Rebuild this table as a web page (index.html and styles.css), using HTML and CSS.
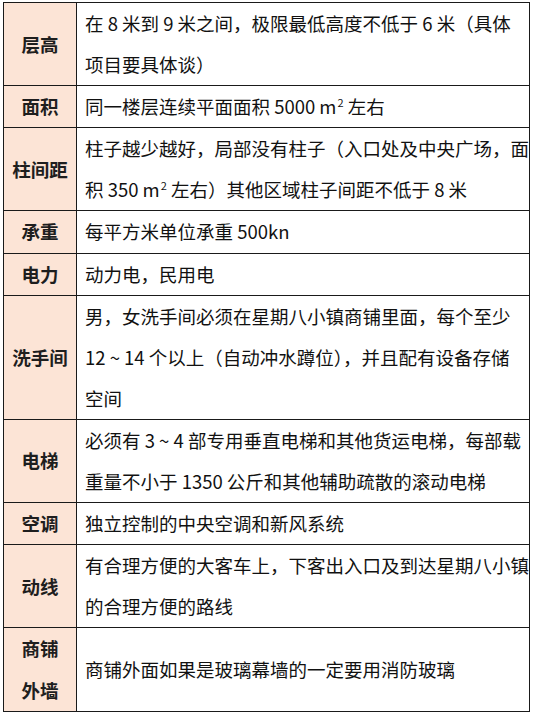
FILE: index.html
```html
<!DOCTYPE html>
<html lang="zh-CN">
<head>
<meta charset="utf-8">
<link rel="stylesheet" href="styles.css">
</head>
<body>
<table class="spec">
  <colgroup><col class="c-label"><col class="c-body"></colgroup>
  <tr><th>层高</th><td>在 8 米到 9 米之间，极限最低高度不低于 6 米（具体<br>项目要具体谈）</td></tr>
  <tr><th>面积</th><td>同一楼层连续平面面积 5000 m<sup>2</sup> 左右</td></tr>
  <tr><th>柱间距</th><td>柱子越少越好，局部没有柱子（入口处及中央广场，面<br>积 350 m<sup>2</sup> 左右）其他区域柱子间距不低于 8 米</td></tr>
  <tr><th>承重</th><td>每平方米单位承重 500kn</td></tr>
  <tr><th>电力</th><td>动力电，民用电</td></tr>
  <tr><th>洗手间</th><td>男，女洗手间必须在星期八小镇商铺里面，每个至少<br>12 ~ 14 个以上（自动冲水蹲位），并且配有设备存储<br>空间</td></tr>
  <tr><th>电梯</th><td>必须有 3 ~ 4 部专用垂直电梯和其他货运电梯，每部载<br>重量不小于 1350 公斤和其他辅助疏散的滚动电梯</td></tr>
  <tr><th>空调</th><td>独立控制的中央空调和新风系统</td></tr>
  <tr><th>动线</th><td>有合理方便的大客车上，下客出入口及到达星期八小镇<br>的合理方便的路线</td></tr>
  <tr><th>商铺<br>外墙</th><td>商铺外面如果是玻璃幕墙的一定要用消防玻璃</td></tr>
</table>
</body>
</html>
```

FILE: styles.css
```css
html, body {
  margin: 0;
  padding: 0;
  background: #ffffff;
}

.spec {
  margin: 2px 0 0 3px;
  width: 527px;
  table-layout: fixed;
  border-collapse: collapse;
  font-family: "Noto Sans CJK SC", "Microsoft YaHei", sans-serif;
  font-size: 18.5px;
  line-height: 41.1px;
  color: #111111;
}

.c-label { width: 73px; }

.spec th,
.spec td {
  border: 1px solid #1a1a1a;
  padding: 0;
  vertical-align: middle;
  white-space: nowrap;
}

.spec th {
  background: #fce4d6;
  font-weight: 700;
  text-align: center;
  color: #1e1e1e;
}

.spec td {
  padding-left: 8px;
  text-align: left;
  overflow: hidden;
}

.spec sup {
  font-size: 11px;
  line-height: 0;
  vertical-align: 7px;
  margin-left: 1px;
}
```
